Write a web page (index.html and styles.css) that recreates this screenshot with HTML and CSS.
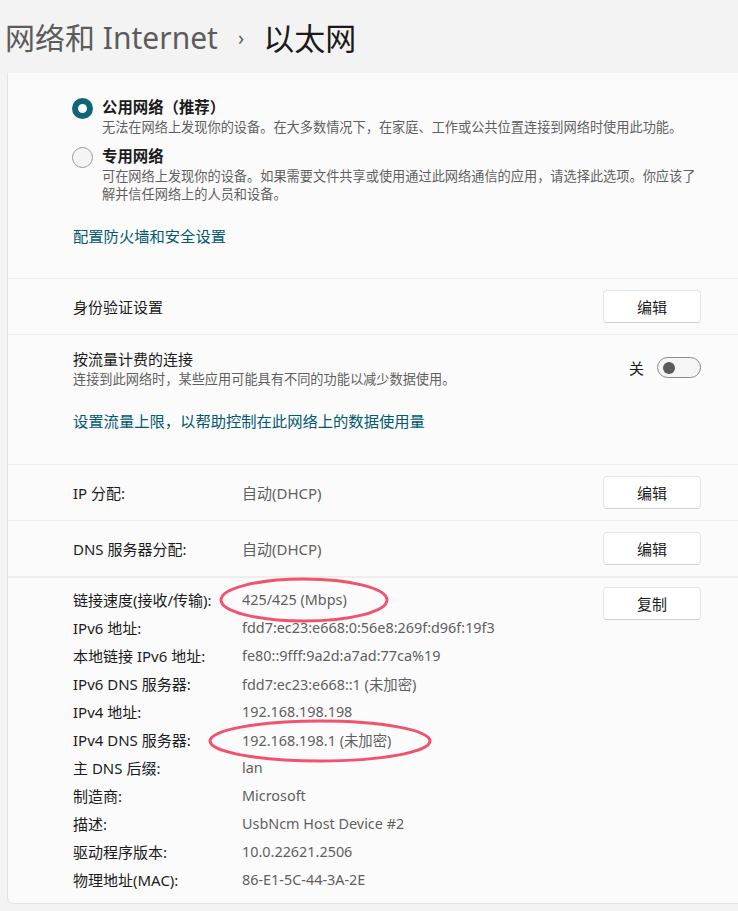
FILE: index.html
```html
<!DOCTYPE html>
<html lang="zh-CN">
<head>
<meta charset="utf-8">
<title>以太网</title>
<link rel="stylesheet" href="styles.css">
</head>
<body>
<div class="page">
  <header class="crumb">
    <span class="crumb-parent">网络和 Internet</span>
    <span class="crumb-sep">›</span>
    <span class="crumb-current">以太网</span>
  </header>

  <main class="panel">
    <section class="sec sec-profile">
      <div class="radio-item">
        <span class="radio radio-on"></span>
        <div class="radio-text">
          <div class="radio-title">公用网络（推荐）</div>
          <div class="desc">无法在网络上发现你的设备。在大多数情况下，在家庭、工作或公共位置连接到网络时使用此功能。</div>
        </div>
      </div>
      <div class="radio-item radio-item-2">
        <span class="radio"></span>
        <div class="radio-text">
          <div class="radio-title">专用网络</div>
          <div class="desc">可在网络上发现你的设备。如果需要文件共享或使用通过此网络通信的应用，请选择此选项。你应该了解并信任网络上的人员和设备。</div>
        </div>
      </div>
      <a class="link link-fw">配置防火墙和安全设置</a>
    </section>

    <section class="sec row">
      <div class="row-label">身份验证设置</div>
      <button class="btn">编辑</button>
    </section>

    <section class="sec sec-metered">
      <div class="metered-top">
        <div>
          <div class="row-label">按流量计费的连接</div>
          <div class="desc">连接到此网络时，某些应用可能具有不同的功能以减少数据使用。</div>
        </div>
        <div class="toggle-wrap">
          <span class="toggle-label">关</span>
          <span class="toggle"><span class="knob"></span></span>
        </div>
      </div>
      <a class="link link-limit">设置流量上限，以帮助控制在此网络上的数据使用量</a>
    </section>

    <section class="sec row">
      <div class="row-label kv-label">IP 分配:</div>
      <div class="kv-value grow">自动(DHCP)</div>
      <button class="btn">编辑</button>
    </section>

    <section class="sec row sec-dns">
      <div class="row-label kv-label">DNS 服务器分配:</div>
      <div class="kv-value grow">自动(DHCP)</div>
      <button class="btn">编辑</button>
    </section>

    <section class="details">
      <dl class="props">
        <dt>链接速度(接收/传输):</dt><dd>425/425 (Mbps)</dd>
        <dt>IPv6 地址:</dt><dd>fdd7:ec23:e668:0:56e8:269f:d96f:19f3</dd>
        <dt>本地链接 IPv6 地址:</dt><dd>fe80::9fff:9a2d:a7ad:77ca%19</dd>
        <dt>IPv6 DNS 服务器:</dt><dd>fdd7:ec23:e668::1 (未加密)</dd>
        <dt>IPv4 地址:</dt><dd>192.168.198.198</dd>
        <dt>IPv4 DNS 服务器:</dt><dd>192.168.198.1 (未加密)</dd>
        <dt>主 DNS 后缀:</dt><dd>lan</dd>
        <dt>制造商:</dt><dd>Microsoft</dd>
        <dt>描述:</dt><dd>UsbNcm Host Device #2</dd>
        <dt>驱动程序版本:</dt><dd>10.0.22621.2506</dd>
        <dt>物理地址(MAC):</dt><dd>86-E1-5C-44-3A-2E</dd>
      </dl>
      <button class="btn btn-copy">复制</button>
    </section>
  </main>

  <svg class="marks" width="738" height="911" viewBox="0 0 738 911" aria-hidden="true">
    <ellipse cx="304" cy="600" rx="83" ry="21" />
    <ellipse cx="320" cy="741" rx="110" ry="20" />
  </svg>
</div>
</body>
</html>
```

FILE: styles.css
```css
html, body {
  margin: 0;
  padding: 0;
  overflow: hidden;
  background: #f3f3f3;
}

body {
  font-family: "Segoe UI", "Noto Sans", "Noto Sans CJK SC", sans-serif;
  color: #1b1b1b;
  font-size: 15px;
}

.page {
  position: relative;
  width: 738px;
  height: 911px;
}

.crumb {
  height: 73px;
  box-sizing: border-box;
  padding: 18px 0 0 5px;
  font-size: 30px;
  line-height: 40px;
  display: flex;
  align-items: flex-start;
  white-space: nowrap;
}

.crumb-parent {
  color: #5c5c5c;
}

.crumb-sep {
  color: #5c5c5c;
  font-size: 20px;
  line-height: 40px;
  margin: 0 19px 0 20px;
}

.crumb-current {
  color: #1a1a1a;
  font-size: 31px;
}

.panel {
  box-sizing: border-box;
  width: 745px;
  margin-left: 7px;
  background: #fbfbfb;
  border-left: 1px solid #e3e3e3;
  border-bottom: 1px solid #e3e3e3;
  border-bottom-left-radius: 7px;
}

.sec {
  box-sizing: border-box;
  padding: 0 51px 0 65px;
  border-top: 1px solid #ececec;
}

.sec-profile {
  border-top: none;
  padding-top: 25px;
  padding-bottom: 32px;
}

.radio-item {
  display: flex;
  align-items: flex-start;
}

.radio-item-2 {
  margin-top: 11px;
}

.radio {
  flex: none;
  box-sizing: border-box;
  width: 21px;
  height: 21px;
  border-radius: 50%;
  border: 1px solid #9a9a9a;
  background: #f4f4f4;
  margin: 0 9px 0 -1px;
}

.radio-on {
  border: 6px solid #0f6577;
  background: #ffffff;
}

.radio-title {
  font-size: 15.4px;
  line-height: 20px;
  font-weight: 600;
  color: #1b1b1b;
}

.desc {
  font-size: 13.2px;
  line-height: 18px;
  color: #5f5f5f;
}

.link {
  display: block;
  color: #00596e;
  font-size: 15.3px;
  line-height: 20px;
  cursor: pointer;
}

.link-fw {
  margin-top: 23px;
}

.row {
  display: flex;
  align-items: center;
  min-height: 55px;
  padding-top: 11px;
  padding-bottom: 11px;
}

.sec-dns {
  min-height: 56px;
}

.row-label {
  font-size: 15px;
  line-height: 20px;
  color: #1b1b1b;
  flex: 1;
}

.kv-label {
  flex: none;
  width: 169px;
}

.kv-value {
  color: #5f5f5f;
  line-height: 20px;
}

.grow {
  flex: 1;
}

.btn {
  flex: none;
  width: 98px;
  height: 33px;
  box-sizing: border-box;
  background: #ffffff;
  border: 1px solid #e5e5e5;
  border-bottom-color: #d0d0d0;
  border-radius: 4px;
  font-family: inherit;
  font-size: 15px;
  color: #1b1b1b;
  padding: 0;
}

.sec-metered {
  padding-top: 14px;
  padding-bottom: 33px;
}

.metered-top {
  display: flex;
  align-items: center;
}

.metered-top > div:first-child {
  flex: 1;
}

.metered-top .desc {
  margin-top: 1px;
}

.toggle-wrap {
  display: flex;
  align-items: center;
  margin-top: -2px;
}

.toggle-label {
  font-size: 15px;
  margin-right: 13px;
}

.toggle {
  box-sizing: border-box;
  width: 44px;
  height: 21px;
  border: 1px solid #8a8a8a;
  border-radius: 11px;
  background: #f5f5f5;
  display: flex;
  align-items: center;
  padding-left: 5px;
}

.knob {
  width: 12px;
  height: 12px;
  border-radius: 50%;
  background: #5b5b5b;
}

.link-limit {
  margin-top: 23px;
}

.details {
  display: flex;
  align-items: flex-start;
  padding: 7px 51px 10px 65px;
  border-top: 2px solid #ededed;
}

.props {
  flex: 1;
  margin: 0;
  display: grid;
  grid-template-columns: 169px 1fr;
  grid-auto-rows: 28px;
  align-items: center;
}

.props dt {
  margin: 0;
  color: #1b1b1b;
  white-space: nowrap;
}

.props dd {
  margin: 0;
  font-size: 14.4px;
  color: #5f5f5f;
  white-space: nowrap;
}

.btn-copy {
  margin-top: 2px;
}

.marks {
  position: absolute;
  left: 0;
  top: 0;
  pointer-events: none;
}

.marks ellipse {
  fill: none;
  stroke: #f2526c;
  stroke-width: 3;
}
```
